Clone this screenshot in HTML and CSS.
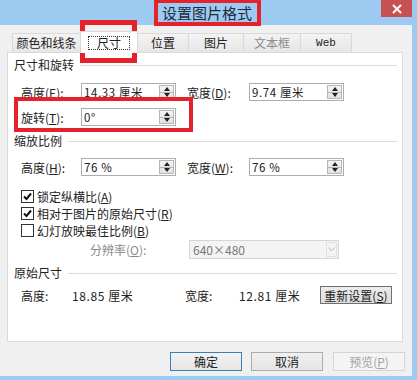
FILE: index.html
```html
<!DOCTYPE html>
<html lang="zh-CN">
<head>
    <meta charset="UTF-8">
    <title>设置图片格式</title>
    <link rel="stylesheet" href="styles.css">
</head>
<body>
<div class="window">
    <div class="titlebar">
        <span class="title">设置图片格式</span>
        <span class="close">
            <svg width="10" height="10" viewBox="0 0 10 10"><path d="M1 1L9 9M9 1L1 9" stroke="#fff" stroke-width="2"/></svg>
        </span>
    </div>

    <div class="client">
        <div class="tabs">
            <div class="tab t1">颜色和线条</div>
            <div class="tab t2 active"><span class="focus">尺寸</span></div>
            <div class="tab t3">位置</div>
            <div class="tab t4">图片</div>
            <div class="tab t5 off">文本框</div>
            <div class="tab t6 mono">Web</div>
        </div>

        <div class="panel">
            <div class="group">尺寸和旋转</div>
            <div class="row first">
                <span>高度(<u>E</u>):</span>
                <div class="spin"><span>14.33 厘米</span><i class="arrows"></i></div>
                <span></span>
                <span>宽度(<u>D</u>):</span>
                <div class="spin"><span>9.74 厘米</span><i class="arrows"></i></div>
            </div>
            <div class="row second">
                <span>旋转(<u>T</u>):</span>
                <div class="spin"><span>0°</span><i class="arrows"></i></div>
            </div>

            <div class="group g2">缩放比例</div>
            <div class="row scale">
                <span>高度(<u>H</u>):</span>
                <div class="spin"><span>76 %</span><i class="arrows"></i></div>
                <span></span>
                <span>宽度(<u>W</u>):</span>
                <div class="spin"><span>76 %</span><i class="arrows"></i></div>
            </div>

            <div class="check c1">
                <span class="box"><svg width="11" height="11" viewBox="0 0 11 11"><path d="M2 5.5L4.5 8L9 2.5" stroke="#111" stroke-width="2" fill="none"/></svg></span>
                锁定纵横比(<u>A</u>)
            </div>
            <div class="check">
                <span class="box"><svg width="11" height="11" viewBox="0 0 11 11"><path d="M2 5.5L4.5 8L9 2.5" stroke="#111" stroke-width="2" fill="none"/></svg></span>
                相对于图片的原始尺寸(<u>R</u>)
            </div>
            <div class="check">
                <span class="box"></span>
                幻灯放映最佳比例(<u>B</u>)
            </div>

            <div class="res">
                <span class="res-label">分辨率(<u>O</u>):</span>
                <div class="combo"><span>640×480</span><i class="drop"><svg width="7" height="5" viewBox="0 0 7 5"><path d="M0.5 0.5L3.5 4L6.5 0.5" stroke="#b9b9b9" fill="none"/></svg></i></div>
            </div>

            <div class="group g3">原始尺寸</div>
            <div class="orig">
                <span>高度:</span>
                <span class="num">18.85 厘米</span>
                <span>宽度:</span>
                <span class="num">12.81 厘米</span>
                <button class="btn reset">重新设置(<u>S</u>)</button>
            </div>
        </div>

        <div class="actions">
            <button class="btn default">确定</button>
            <button class="btn">取消</button>
            <button class="btn disabled">预览(<u>P</u>)</button>
        </div>
    </div>

    <div class="mark mark-title"></div>
    <div class="mark mark-tab"></div>
    <div class="mark mark-rotate"></div>
</div>
</body>
</html>
```

FILE: styles.css
```css
body {
    margin: 0;
    width: 417px;
    height: 380px;
    overflow: hidden;
    background-color: #9dcaf1;
    font-family: "Noto Sans CJK SC", "Liberation Sans", sans-serif;
    font-size: 12px;
    color: #222;
}
u {
    text-decoration: underline;
}
.window {
    position: relative;
    height: 380px;
}
.titlebar {
    height: 25px;
    display: flex;
    justify-content: center;
    align-items: center;
    position: relative;
}
.title {
    font-size: 15px;
    color: #1d2b3a;
    margin-right: 3px;
    line-height: 25px;
}
.close {
    position: absolute;
    right: 5px;
    top: 0;
    width: 31px;
    height: 17px;
    background-color: #c75050;
    display: flex;
    justify-content: center;
    align-items: center;
}
.client {
    background-color: #f0f0f0;
    width: 412px;
    height: 351px;
}

/* tabs */
.tabs {
    display: flex;
    align-items: flex-end;
    height: 27px;
    padding-left: 12px;
}
.tab {
    box-sizing: border-box;
    height: 19px;
    border: 1px solid #d9d9d9;
    border-bottom: none;
    background: linear-gradient(#f3f3f3, #e6e6e6);
    margin-left: -1px;
    display: flex;
    justify-content: center;
    align-items: center;
    line-height: 14px;
}
.t1 { width: 69px; margin-left: 0; }
.t2 { width: 58px; }
.t3 { width: 52px; }
.t4 { width: 56px; }
.t5 { width: 58px; }
.t6 { width: 52px; }
.tab.off {
    color: #8d8d8d;
}
.tab.mono {
    font-family: "Liberation Mono", monospace;
    font-size: 11px;
    color: #222;
}
.tab.active {
    height: 22px;
    background: #fff;
    position: relative;
    z-index: 1;
    margin-bottom: -1px;
}
.focus {
    border: 1px dotted #333;
    padding: 0 8px;
    line-height: 12px;
}

/* panel */
.panel {
    box-sizing: border-box;
    width: 396px;
    height: 290px;
    margin-left: 7px;
    border: 1px solid #d9d9d9;
    background-color: #fff;
    padding: 4px 5px 0 6px;
}
.group {
    display: flex;
    align-items: center;
    height: 16px;
    line-height: 16px;
}
.group::after {
    content: "";
    flex: 1;
    height: 1px;
    background-color: #dcdcdc;
    margin-left: 6px;
    margin-top: 1px;
}
.g2 { margin-top: 7px; }
.g3 { margin-top: 6px; }

.row {
    display: grid;
    grid-template-columns: 60px 95px 11px 62px 95px;
    align-items: center;
    height: 18px;
    padding-left: 7px;
}
.row.first { margin-top: 10px; }
.row.second { margin-top: 7px; }
.row.scale { margin-top: 9px; }

.spin {
    box-sizing: border-box;
    height: 18px;
    border: 1px solid #abadb3;
    background: #fff;
    display: flex;
    align-items: center;
    justify-content: space-between;
    padding-left: 2px;
    padding-right: 1px;
    font-size: 11.5px;
    letter-spacing: 0.6px;
}
.num {
    letter-spacing: 0.6px;
}
.arrows {
    box-sizing: border-box;
    width: 15px;
    height: 14px;
    border: 1px solid #b6b6b6;
    background:
        linear-gradient(#b6b6b6, #b6b6b6) center / 100% 1px no-repeat,
        linear-gradient(#f4f4f4, #e2e2e2);
    position: relative;
}
.arrows::before,
.arrows::after {
    content: "";
    position: absolute;
    left: 4px;
    border-left: 3px solid transparent;
    border-right: 3px solid transparent;
}
.arrows::before {
    top: 1px;
    border-bottom: 4px solid #222;
}
.arrows::after {
    bottom: 1px;
    border-top: 4px solid #222;
}

.check {
    display: flex;
    align-items: center;
    height: 17px;
    padding-left: 7px;
}
.check.c1 { margin-top: 12px; }
.box {
    box-sizing: border-box;
    width: 13px;
    height: 13px;
    border: 1px solid #333;
    background: #fff;
    margin-right: 3px;
    display: flex;
    justify-content: center;
    align-items: center;
}

.res {
    display: flex;
    align-items: center;
    height: 19px;
    margin-top: 1px;
    padding-left: 76px;
}
.res-label {
    width: 99px;
    color: #8a8a8a;
}
.combo {
    box-sizing: border-box;
    width: 150px;
    height: 19px;
    border: 1px solid #d5d5d5;
    background: #f4f4f4;
    color: #777;
    display: flex;
    align-items: center;
    justify-content: space-between;
    padding-left: 3px;
    padding-right: 1px;
}
.drop {
    box-sizing: border-box;
    width: 11px;
    height: 15px;
    border: 1px solid #e1e1e1;
    display: flex;
    justify-content: center;
    align-items: center;
}

.orig {
    display: grid;
    grid-template-columns: 51px 113px 54px 81px 72px;
    align-items: center;
    height: 18px;
    margin-top: 5px;
    padding-left: 7px;
}

.btn {
    box-sizing: border-box;
    width: 72px;
    height: 19px;
    padding: 0;
    border: 1px solid #acacac;
    background: linear-gradient(#f0f0f0, #e5e5e5);
    font-family: inherit;
    font-size: 12px;
    color: #222;
    line-height: 15px;
}
.btn.reset {
    height: 18px;
    border-color: #707070;
    background: linear-gradient(#ececec, #dcdcdc);
}
.btn.default {
    border-color: #3c7fb1;
    background: linear-gradient(#f2f2f2, #e6e6e6);
}
.btn.disabled {
    border-color: #d5d5d5;
    background: #f4f4f4;
    color: #a3a3a3;
    margin-left: 1px;
}
.actions {
    display: flex;
    justify-content: flex-end;
    gap: 9px;
    margin-top: 10px;
    padding-right: 7px;
}

/* red annotation boxes */
.mark {
    position: absolute;
    box-sizing: border-box;
    border: 4px solid #e3222b;
}
.mark-title {
    left: 154px;
    top: -1px;
    width: 107px;
    height: 27px;
}
.mark-tab {
    left: 80px;
    top: 20px;
    width: 57px;
    height: 43px;
    border-width: 5px;
}
.mark-rotate {
    left: 14px;
    top: 97px;
    width: 179px;
    height: 35px;
}
```
